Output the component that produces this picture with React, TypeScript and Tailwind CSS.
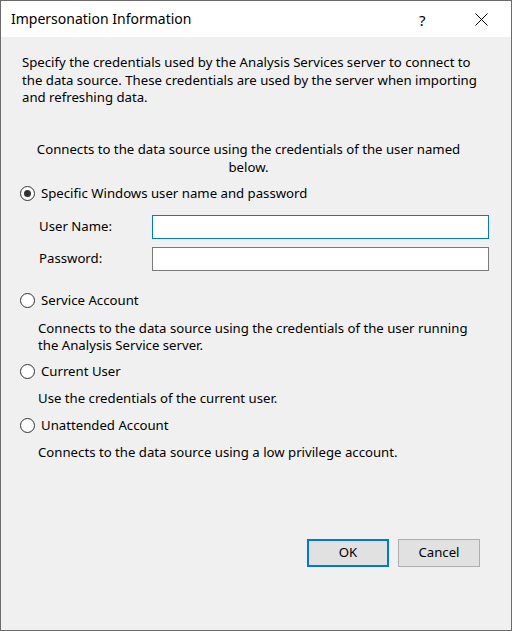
import React from "react";

const font = { fontFamily: '"Noto Sans", "Open Sans", sans-serif' };

function Radio({ checked }: { checked?: boolean }) {
  return (
    <div className="w-[15px] h-[15px] rounded-full border border-[#333333] bg-white flex items-center justify-center shrink-0">
      {checked && <div className="w-[7px] h-[7px] rounded-full bg-[#333333]" />}
    </div>
  );
}

function RadioRow({ label, checked, className }: { label: string; checked?: boolean; className?: string }) {
  return (
    <div className={"flex items-center h-[17.5px] pl-[19px] " + (className ?? "")}>
      <Radio checked={checked} />
      <span className="ml-[6px] whitespace-nowrap">{label}</span>
    </div>
  );
}

export default function App() {
  return (
    <div
      className="w-[512px] h-[631px] border border-[#6b6b6b] flex flex-col bg-[#f0f0f0] text-[13.2px] leading-[17.5px] text-black"
      style={font}
    >
      <div className="h-[36px] bg-white flex items-center shrink-0 relative">
        <span className="pl-[10px] text-[14px] text-black">Impersonation Information</span>
        <span className="absolute left-[418px] top-[9px] text-[15px] leading-[20px]">?</span>
        <svg className="absolute left-[474px] top-[12px]" width="13" height="13" viewBox="0 0 13 13">
          <path d="M0.5 0.5 L12.5 12.5 M12.5 0.5 L0.5 12.5" stroke="#000" strokeWidth="1" fill="none" />
        </svg>
      </div>
      <div className="flex-1 flex flex-col">
        <p className="mt-[17px] pl-[21px] whitespace-nowrap">
          Specify the credentials used by the Analysis Services server to connect to
          <br />
          the data source. These credentials are used by the server when importing
          <br />
          and refreshing data.
        </p>
        <p className="mt-[34.5px] pl-[21px] w-[474px] text-center whitespace-nowrap">
          Connects to the data source using the credentials of the user named
          <br />
          below.
        </p>
        <RadioRow className="mt-[9px]" label="Specific Windows user name and password" checked />
        <div className="mt-[12px] flex items-center h-[24px] pl-[38px]">
          <span className="w-[113px] whitespace-nowrap">User Name:</span>
          <div className="w-[337px] h-[24px] bg-white border border-[#0078d7]" />
        </div>
        <div className="mt-[8px] flex items-center h-[24px] pl-[38px]">
          <span className="w-[113px] whitespace-nowrap">Password:</span>
          <div className="w-[337px] h-[24px] bg-white border border-[#7a7a7a]" />
        </div>
        <RadioRow className="mt-[21.5px]" label="Service Account" />
        <p className="mt-[10px] pl-[37px] whitespace-nowrap">
          Connects to the data source using the credentials of the user running
          <br />
          the Analysis Service server.
        </p>
        <RadioRow className="mt-[8px]" label="Current User" />
        <p className="mt-[10px] pl-[37px] whitespace-nowrap">Use the credentials of the current user.</p>
        <RadioRow className="mt-[9px]" label="Unattended Account" />
        <p className="mt-[10px] pl-[37px] whitespace-nowrap">Connects to the data source using a low privilege account.</p>
        <div className="mt-auto pb-[63px] flex justify-end pr-[31px] gap-[9px]">
          <button className="w-[82px] h-[28px] bg-[#e1e1e1] border-2 border-[#0078d7] text-black">OK</button>
          <button className="w-[82px] h-[28px] bg-[#e1e1e1] border border-[#adadad] text-black">Cancel</button>
        </div>
      </div>
    </div>
  );
}
